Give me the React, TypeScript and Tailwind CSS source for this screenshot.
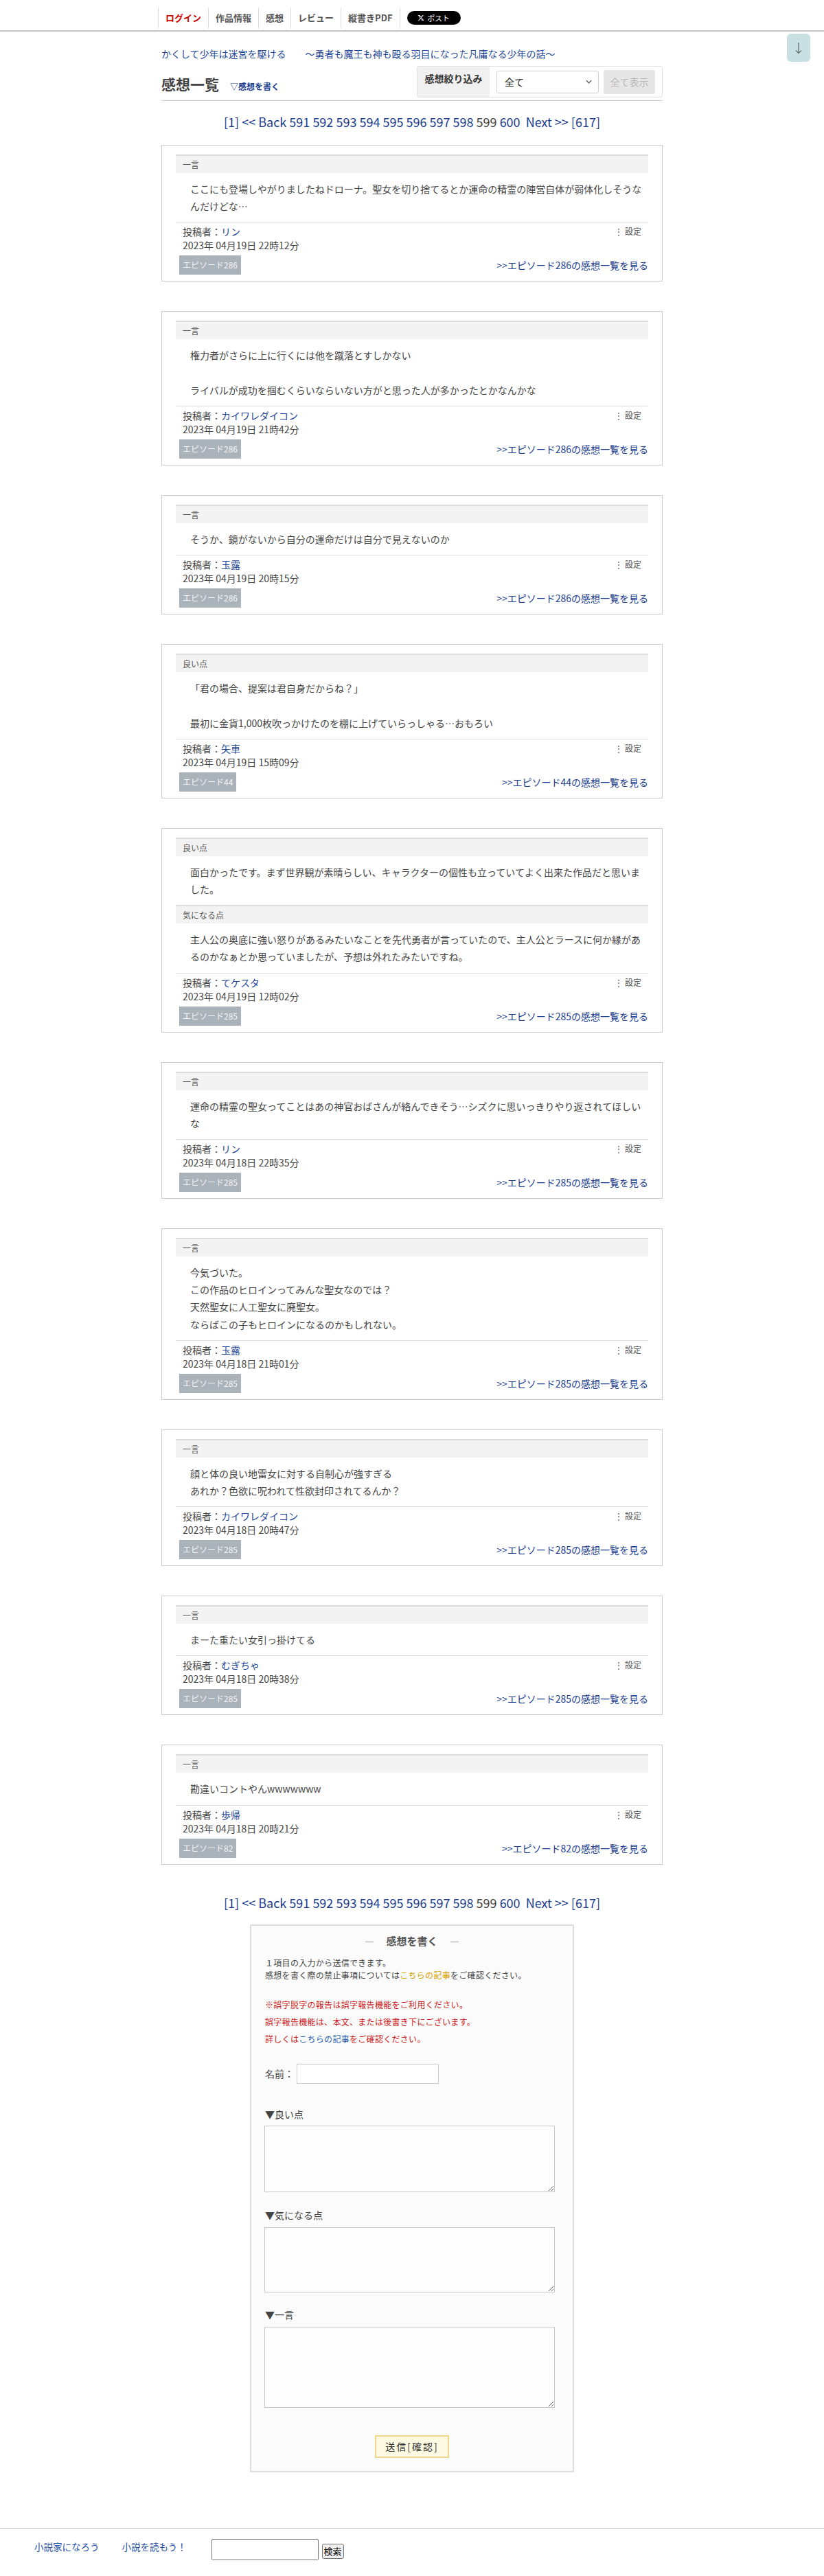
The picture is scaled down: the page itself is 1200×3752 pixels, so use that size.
import React, { Fragment } from "react";

type Section = { label: string; lines: string[] };
type Comment = { sections: Section[]; name: string; date: string; ep: string };

const comments: Comment[] = [
  {
    sections: [{ label: "一言", lines: ["ここにも登場しやがりましたねドローナ。聖女を切り捨てるとか運命の精霊の陣営自体が弱体化しそうなんだけどな…"] }],
    name: "リン",
    date: "2023年 04月19日 22時12分",
    ep: "286",
  },
  {
    sections: [{ label: "一言", lines: ["権力者がさらに上に行くには他を蹴落とすしかない", "", "ライバルが成功を掴むくらいならいない方がと思った人が多かったとかなんかな"] }],
    name: "カイワレダイコン",
    date: "2023年 04月19日 21時42分",
    ep: "286",
  },
  {
    sections: [{ label: "一言", lines: ["そうか、鏡がないから自分の運命だけは自分で見えないのか"] }],
    name: "玉露",
    date: "2023年 04月19日 20時15分",
    ep: "286",
  },
  {
    sections: [{ label: "良い点", lines: ["「君の場合、提案は君自身だからね？」", "", "最初に金貨1,000枚吹っかけたのを棚に上げていらっしゃる…おもろい"] }],
    name: "矢車",
    date: "2023年 04月19日 15時09分",
    ep: "44",
  },
  {
    sections: [
      { label: "良い点", lines: ["面白かったです。まず世界観が素晴らしい、キャラクターの個性も立っていてよく出来た作品だと思いました。"] },
      { label: "気になる点", lines: ["主人公の奥底に強い怒りがあるみたいなことを先代勇者が言っていたので、主人公とラースに何か縁があるのかなぁとか思っていましたが、予想は外れたみたいですね。"] },
    ],
    name: "てケスタ",
    date: "2023年 04月19日 12時02分",
    ep: "285",
  },
  {
    sections: [{ label: "一言", lines: ["運命の精霊の聖女ってことはあの神官おばさんが絡んできそう…シズクに思いっきりやり返されてほしいな"] }],
    name: "リン",
    date: "2023年 04月18日 22時35分",
    ep: "285",
  },
  {
    sections: [
      {
        label: "一言",
        lines: ["今気づいた。", "この作品のヒロインってみんな聖女なのでは？", "天然聖女に人工聖女に廃聖女。", "ならばこの子もヒロインになるのかもしれない。"],
      },
    ],
    name: "玉露",
    date: "2023年 04月18日 21時01分",
    ep: "285",
  },
  {
    sections: [{ label: "一言", lines: ["顔と体の良い地雷女に対する自制心が強すぎる", "あれか？色欲に呪われて性欲封印されてるんか？"] }],
    name: "カイワレダイコン",
    date: "2023年 04月18日 20時47分",
    ep: "285",
  },
  {
    sections: [{ label: "一言", lines: ["まーた重たい女引っ掛けてる"] }],
    name: "むぎちゃ",
    date: "2023年 04月18日 20時38分",
    ep: "285",
  },
  {
    sections: [{ label: "一言", lines: ["勘違いコントやんwwwwwww"] }],
    name: "歩帰",
    date: "2023年 04月18日 20時21分",
    ep: "82",
  },
];

function Pager() {
  return (
    <p className="text-center text-[18px] leading-[24px] text-[#1a3d8f]">
      <a>[1]</a> <a>&lt;&lt; Back</a> <a>591</a> <a>592</a> <a>593</a> <a>594</a> <a>595</a> <a>596</a> <a>597</a>{" "}
      <a>598</a> <span className="text-[#444]">599</span> <a>600</a>&nbsp; <a>Next &gt;&gt;</a> <a>[617]</a>
    </p>
  );
}

function Card({ c }: { c: Comment }) {
  return (
    <div className="border border-[#ccc] bg-white px-5 pt-[13px] pb-[9px]">
      {c.sections.map((s, si) => (
        <div key={si}>
          <div className="h-[27px] border-t-2 border-[#ddd] bg-[#f3f3f3] pl-[10px] text-[12px] leading-[25px] text-[#555]">
            {s.label}
          </div>
          <p className="pl-[21px] pr-[2px] pt-[11px] pb-[10px] text-[14px] leading-[25.2px] text-[#444]">
            {s.lines.map((l, i) => (
              <Fragment key={i}>
                {i > 0 && <br />}
                {l}
              </Fragment>
            ))}
          </p>
        </div>
      ))}
      <div className="border-t border-[#ddd]" />
      <div className="pt-[3px]">
        <div className="flex justify-between px-[10px] text-[14px] leading-[20px] text-[#444]">
          <span>
            投稿者：<a className="text-[#1f4799]">{c.name}</a>
          </span>
          <span className="text-[12px] text-[#555]">⋮ 設定</span>
        </div>
        <div className="px-[10px] text-[14px] leading-[21px] text-[#444]">{c.date}</div>
        <div className="mt-[4px] flex items-center justify-between pl-[5px]">
          <span className="h-[28px] bg-[#aab2ba] px-[5px] text-[12px] leading-[28px] text-[#f4f4f4]">エピソード{c.ep}</span>
          <a className="text-[14px] leading-[20px] text-[#1a3d8f]">&gt;&gt;エピソード{c.ep}の感想一覧を見る</a>
        </div>
      </div>
    </div>
  );
}

export default function App() {
  return (
    <div className="relative bg-white font-['Noto_Sans_CJK_JP','Noto_Sans',sans-serif] text-[#333]">
      {/* header */}
      <header className="h-[46px] border-b-2 border-[#c4c4c4]">
        <nav className="mx-auto flex w-[740px] items-center pt-[11px]">
          <a className="flex h-[30px] items-center border-l border-[#ddd] px-[10px] text-[13px] font-bold text-[#c00]">ログイン</a>
          <a className="flex h-[30px] items-center border-l border-[#ddd] px-[10px] text-[13px] font-bold text-[#555]">作品情報</a>
          <a className="flex h-[30px] items-center border-l border-[#ddd] px-[10px] text-[13px] font-bold text-[#555]">感想</a>
          <a className="flex h-[30px] items-center border-l border-[#ddd] px-[10px] text-[13px] font-bold text-[#555]">レビュー</a>
          <a className="flex h-[30px] items-center border-x border-[#ddd] px-[10px] text-[13px] font-bold text-[#555]">縦書きPDF</a>
          <a className="ml-[10px] flex h-[20px] w-[78px] items-center justify-center gap-[4px] rounded-full bg-black text-[11px] text-white">
            <svg viewBox="0 0 24 24" className="h-[10px] w-[10px]" fill="white">
              <path d="M18.244 2.25h3.308l-7.227 8.26 8.502 11.24H16.17l-5.214-6.817L4.99 21.75H1.68l7.73-8.835L1.254 2.25H8.08l4.713 6.231zm-1.161 17.52h1.833L7.084 4.126H5.117z" />
            </svg>
            ポスト
          </a>
        </nav>
      </header>

      {/* floating down button */}
      <div className="absolute right-[20px] top-[49px] flex h-[41px] w-[34px] items-center justify-center rounded-[6px] bg-[#c8e0e1]">
        <svg viewBox="0 0 34 41" className="h-[41px] w-[34px]" fill="none" stroke="#6a7777" strokeWidth="1.4">
          <path d="M17 13v15" />
          <path d="M13 24.5l4 4 4-4" />
        </svg>
      </div>

      <main className="mx-auto w-[730px]">
        <p className="mt-[24px] text-[14px] leading-[16px] text-[#1f4799]">
          かくして少年は迷宮を駆ける<span className="ml-[28px]">～勇者も魔王も神も殴る羽目になった凡庸なる少年の話～</span>
        </p>

        <div className="mt-[10px] flex h-[46px] items-center justify-between">
          <div className="flex items-baseline pt-[6px]">
            <h2 className="text-[21px] font-bold leading-[28px] text-[#444]">感想一覧</h2>
            <a className="ml-[16px] text-[12px] font-bold text-[#1a3d8f]">▽感想を書く</a>
          </div>
          <div className="flex h-[46px] overflow-hidden rounded-[3px] border border-[#e0e0e0]">
            <div className="w-[105px] bg-[#f0f0f0] pt-[7px] text-center text-[14px] font-bold leading-[20px] text-[#333]">感想絞り込み</div>
            <div className="flex items-center pl-[10px] pr-[10px]">
              <div className="flex h-[33px] w-[149px] items-center justify-between rounded-[3px] border border-[#d6cccc] bg-white pl-[11px] pr-[9px] text-[14px] text-[#222]">
                <span>全て</span>
                <svg viewBox="0 0 10 6" className="h-[6px] w-[9px]" fill="none" stroke="#444" strokeWidth="1.3">
                  <path d="M1 1l4 4 4-4" />
                </svg>
              </div>
              <div className="ml-[7px] flex h-[35px] w-[75px] items-center justify-center rounded-[3px] bg-[#e6e6e6] text-[14px] text-[#b8b8b8]">
                全て表示
              </div>
            </div>
          </div>
        </div>
        <div className="mt-[4px] border-t border-[#ccc]" />

        <div className="mt-[18px]">
          <Pager />
        </div>

        <div className="mt-[22px] flex flex-col gap-[43px]">
          {comments.map((c, i) => (
            <Card key={i} c={c} />
          ))}
        </div>

        <div className="mt-[43px]">
          <Pager />
        </div>

        {/* form */}
        <div className="mx-auto mt-[20px] w-[472px] border-2 border-[#ddd] bg-[#fbfbfb] px-[19px] pt-[12px] pb-[19px]">
          <div className="flex justify-center text-[15px] leading-[20px]">
            <span className="text-[#999]">—</span>
            <span className="mx-[18px] font-bold text-[#555]">感想を書く</span>
            <span className="text-[#999]">—</span>
          </div>
          <p className="mt-[13px] pl-[1px] text-[12px] leading-[18px] tracking-[0.3px] text-[#444]">
            １項目の入力から送信できます。
            <br />
            感想を書く際の禁止事項については<a className="text-[#d9a000]">こちらの記事</a>をご確認ください。
          </p>
          <div className="mt-[21px] pl-[1px] text-[12px] leading-[25px] tracking-[0.3px] text-[#cc1a1a]">
            <p>※誤字脱字の報告は誤字報告機能をご利用ください。</p>
            <p>誤字報告機能は、本文、または後書き下にございます。</p>
            <p>
              詳しくは<a className="text-[#2a5db0]">こちらの記事</a>をご確認ください。
            </p>
          </div>
          <div className="mt-[24px] flex items-center pl-[1px]">
            <span className="text-[14px] text-[#444]">名前：</span>
            <input className="ml-[4px] h-[29px] w-[207px] border border-[#ccc] bg-white" />
          </div>

          <p className="mt-[34px] pl-[1px] text-[14px] leading-[20px] text-[#444]">▼良い点</p>
          <textarea className="mt-[7px] block h-[97px] w-[423px] border border-[#c8c8c8] bg-[#fdfdfd]" />
          <p className="mt-[23px] pl-[1px] text-[14px] leading-[20px] text-[#444]">▼気になる点</p>
          <textarea className="mt-[8px] block h-[95px] w-[423px] border border-[#c8c8c8] bg-[#fdfdfd]" />
          <p className="mt-[22px] pl-[1px] text-[14px] leading-[20px] text-[#444]">▼一言</p>
          <textarea className="mt-[8px] block h-[118px] w-[423px] border border-[#c8c8c8] bg-[#fdfdfd]" />

          <div className="mt-[40px] flex justify-center">
            <button className="h-[33px] w-[108px] border-2 border-[#f0d68a] bg-[#fffbe3] text-[14px] tracking-[2px] text-[#333]">
              送信[確認]
            </button>
          </div>
        </div>
      </main>

      {/* footer */}
      <footer className="mt-[81px] border-t border-[#ccc] pb-[21px]">
        <div className="flex items-start pl-[50px] pt-[15px]">
          <a className="mt-[2px] text-[13.5px] leading-[18px] text-[#2650a8]">小説家になろう</a>
          <a className="ml-[33px] mt-[2px] text-[13.5px] leading-[18px] text-[#2650a8]">小説を読もう！</a>
          <input className="ml-[36px] h-[31px] w-[156px] rounded-[2px] border border-[#767676] bg-white" />
          <button className="ml-[5px] mt-[7px] h-[22px] rounded-[3px] border border-[#767676] bg-[#efefef] px-[2px] text-[13px] leading-[18px] text-black">
            検索
          </button>
        </div>
      </footer>
    </div>
  );
}
